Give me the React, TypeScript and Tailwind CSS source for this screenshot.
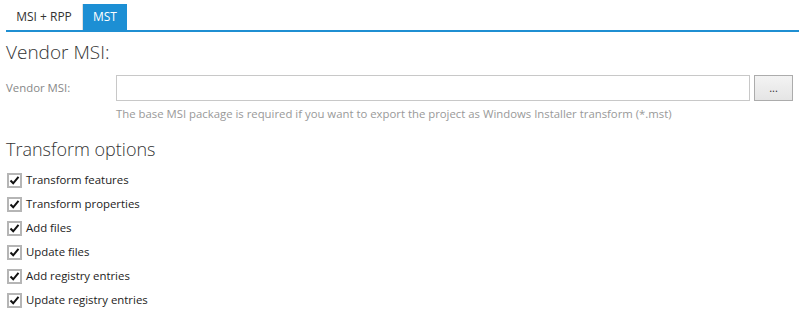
import React from 'react';

const options = [
  'Transform features',
  'Transform properties',
  'Add files',
  'Update files',
  'Add registry entries',
  'Update registry entries',
];

function CheckRow({ label }: { label: string }) {
  return (
    <label className="flex items-center h-[24px] gap-[4px] cursor-pointer">
      <span className="w-[15px] h-[15px] border-2 border-[#b5b5b5] bg-white flex items-center justify-center">
        <svg width="11" height="11" viewBox="0 0 11 11">
          <path d="M1.5 5.5 L4.2 8.3 L9.5 1.8" fill="none" stroke="#111" strokeWidth="2" />
        </svg>
      </span>
      <span className="text-[11.4px] text-[#222]">{label}</span>
    </label>
  );
}

export default function App() {
  return (
    <div className="w-[799px] h-[314px] bg-white overflow-hidden font-['Open_Sans','Noto_Sans',sans-serif]">
      {/* Tabs */}
      <div className="flex ml-[6px] mt-[4px] border-b-2 border-[#1f8fd2] h-[28px]">
        <div className="w-[77px] flex items-center justify-center text-[12px] text-[#333] border-r border-[#e0e0e0]">
          MSI + RPP
        </div>
        <div className="w-[44px] flex items-center justify-center text-[12px] text-white bg-[#1c8fd4]">
          MST
        </div>
      </div>

      <div className="px-[6px]">
        <h2 className="text-[19px] font-light text-[#333] mt-[7px] leading-[26px]">Vendor MSI:</h2>

        <div className="flex items-center mt-[10px]">
          <span className="w-[110px] text-[11.4px] text-[#888]">Vendor MSI:</span>
          <div className="w-[634px] h-[26px] border border-[#c8c8c8] bg-white" />
          <button className="ml-[4px] w-[39px] h-[26px] border border-[#acacac] bg-gradient-to-b from-[#f3f3f3] to-[#e5e5e5] text-[11px] text-[#333] leading-none pb-[2px]">
            ...
          </button>
        </div>
        <p className="ml-[110px] mt-[4px] text-[11.35px] text-[#999]">
          The base MSI package is required if you want to export the project as Windows Installer transform (*.mst)
        </p>

        <h2 className="text-[18px] font-light text-[#333] mt-[14px] leading-[26px]">Transform options</h2>

        <div className="flex flex-col mt-[6px] ml-[1px]">
          {options.map((o) => (
            <CheckRow key={o} label={o} />
          ))}
        </div>
      </div>
    </div>
  );
}
